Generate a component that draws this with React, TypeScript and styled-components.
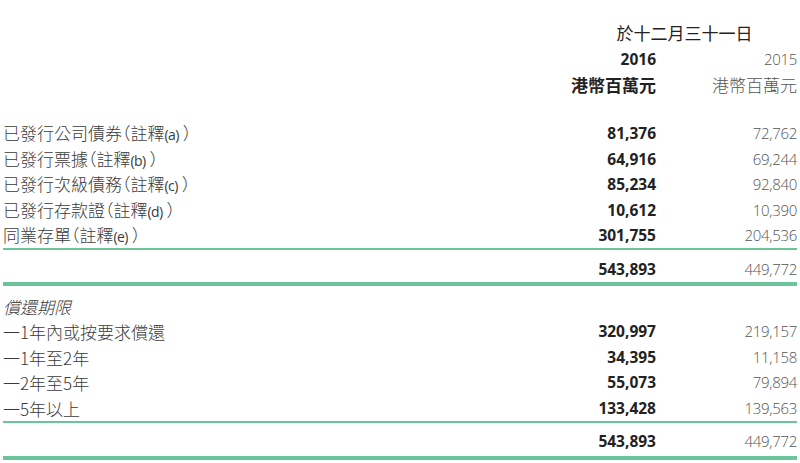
import React from "react";
import styled, { createGlobalStyle } from "styled-components";

const Global = createGlobalStyle`
  html, body { margin: 0; padding: 0; background: #ffffff; }
  body {
    font-family: "Open Sans", "Noto Sans CJK TC", sans-serif;
    color: #3a3a3a;
  }
`;

const Page = styled.div`
  width: 800px;
  height: 463px;
  box-sizing: border-box;
  padding: 20px 3px 0 3px;
  overflow: hidden;
`;

const Header = styled.div`
  display: grid;
  grid-template-columns: 1fr 120px 141px;
  grid-auto-rows: 26px;
  margin-bottom: 22px;
`;

const HeaderTitle = styled.div`
  grid-column: 2 / 4;
  text-align: center;
  padding-left: 36px;
  font-family: "Noto Sans CJK TC", sans-serif;
  font-size: 17px;
  font-weight: 400;
  line-height: 26px;
  color: #222;
`;

const Cell = styled.div<{ $bold?: boolean; $cjk?: boolean }>`
  text-align: right;
  font-family: ${(p) =>
    p.$cjk ? `"Noto Sans CJK TC", sans-serif` : `"Open Sans", "Noto Sans CJK TC", sans-serif`};
  font-size: ${(p) => (p.$cjk ? "17px" : p.$bold ? "15.5px" : "15px")};
  font-weight: ${(p) => (p.$bold ? 700 : 300)};
  color: ${(p) => (p.$bold ? "#222" : "#555")};
  letter-spacing: ${(p) => (p.$bold || p.$cjk ? "0" : "-0.3px")};
  line-height: 26px;
  white-space: nowrap;
`;

const Row = styled.div<{ $gapTop?: number }>`
  display: grid;
  grid-template-columns: 1fr 120px 141px;
  height: 25.5px;
  align-items: center;
  margin-top: ${(p) => p.$gapTop ?? 0}px;
`;

const Label = styled.div<{ $italic?: boolean }>`
  font-family: "Noto Sans CJK TC", sans-serif;
  font-size: 17px;
  font-weight: 300;
  color: #3a3a3a;
  font-style: ${(p) => (p.$italic ? "italic" : "normal")};
  line-height: 25.5px;
  white-space: nowrap;
`;

const Paren = styled.span<{ $close?: boolean }>`
  font-feature-settings: "halt";
  padding-left: ${(p) => (p.$close ? "4px" : "0")};
`;

const Note = styled.span`
  font-family: "Open Sans", sans-serif;
  font-size: 14px;
  font-weight: 400;
  letter-spacing: -0.6px;
`;

const Num = styled.div<{ $bold?: boolean }>`
  text-align: right;
  font-family: "Open Sans", sans-serif;
  font-size: ${(p) => (p.$bold ? "15.5px" : "15px")};
  font-weight: ${(p) => (p.$bold ? 700 : 300)};
  color: ${(p) => (p.$bold ? "#222" : "#555")};
  letter-spacing: ${(p) => (p.$bold ? "0" : "-0.3px")};
  line-height: 25.5px;
`;

const Rule = styled.div<{ $thick?: boolean; $gapTop?: number }>`
  height: ${(p) => (p.$thick ? 4 : 2)}px;
  background: #6cc49b;
  margin-top: ${(p) => p.$gapTop ?? 0}px;
`;

type Item = { label: React.ReactNode; a: string; b: string };

const noted = (text: string, note: string) => (
  <>
    {text}
    <Paren>（</Paren>註釋<Note>({note})</Note>
    <Paren $close>）</Paren>
  </>
);

const section1: Item[] = [
  { label: noted("已發行公司債券", "a"), a: "81,376", b: "72,762" },
  { label: noted("已發行票據", "b"), a: "64,916", b: "69,244" },
  { label: noted("已發行次級債務", "c"), a: "85,234", b: "92,840" },
  { label: noted("已發行存款證", "d"), a: "10,612", b: "10,390" },
  { label: noted("同業存單", "e"), a: "301,755", b: "204,536" },
];

const section2: Item[] = [
  { label: "一1年內或按要求償還", a: "320,997", b: "219,157" },
  { label: "一1年至2年", a: "34,395", b: "11,158" },
  { label: "一2年至5年", a: "55,073", b: "79,894" },
  { label: "一5年以上", a: "133,428", b: "139,563" },
];

const DataRow = ({ item, gapTop }: { item: Item; gapTop?: number }) => (
  <Row $gapTop={gapTop}>
    <Label>{item.label}</Label>
    <Num $bold>{item.a}</Num>
    <Num>{item.b}</Num>
  </Row>
);

export default function App() {
  return (
    <>
      <Global />
      <Page>
        <Header>
          <HeaderTitle>於十二月三十一日</HeaderTitle>
          <div />
          <Cell $bold>2016</Cell>
          <Cell>2015</Cell>
          <div />
          <Cell $bold $cjk>港幣百萬元</Cell>
          <Cell $cjk>港幣百萬元</Cell>
        </Header>

        {section1.map((it, i) => (
          <DataRow key={i} item={it} />
        ))}
        <Rule />
        <Row $gapTop={7}>
          <div />
          <Num $bold>543,893</Num>
          <Num>449,772</Num>
        </Row>
        <Rule $thick />

        <Row $gapTop={7.5}>
          <Label $italic>償還期限</Label>
          <div />
          <div />
        </Row>
        {section2.map((it, i) => (
          <DataRow key={i} item={it} />
        ))}
        <Rule />
        <Row $gapTop={6}>
          <div />
          <Num $bold>543,893</Num>
          <Num>449,772</Num>
        </Row>
        <Rule $thick $gapTop={1} />
      </Page>
    </>
  );
}
